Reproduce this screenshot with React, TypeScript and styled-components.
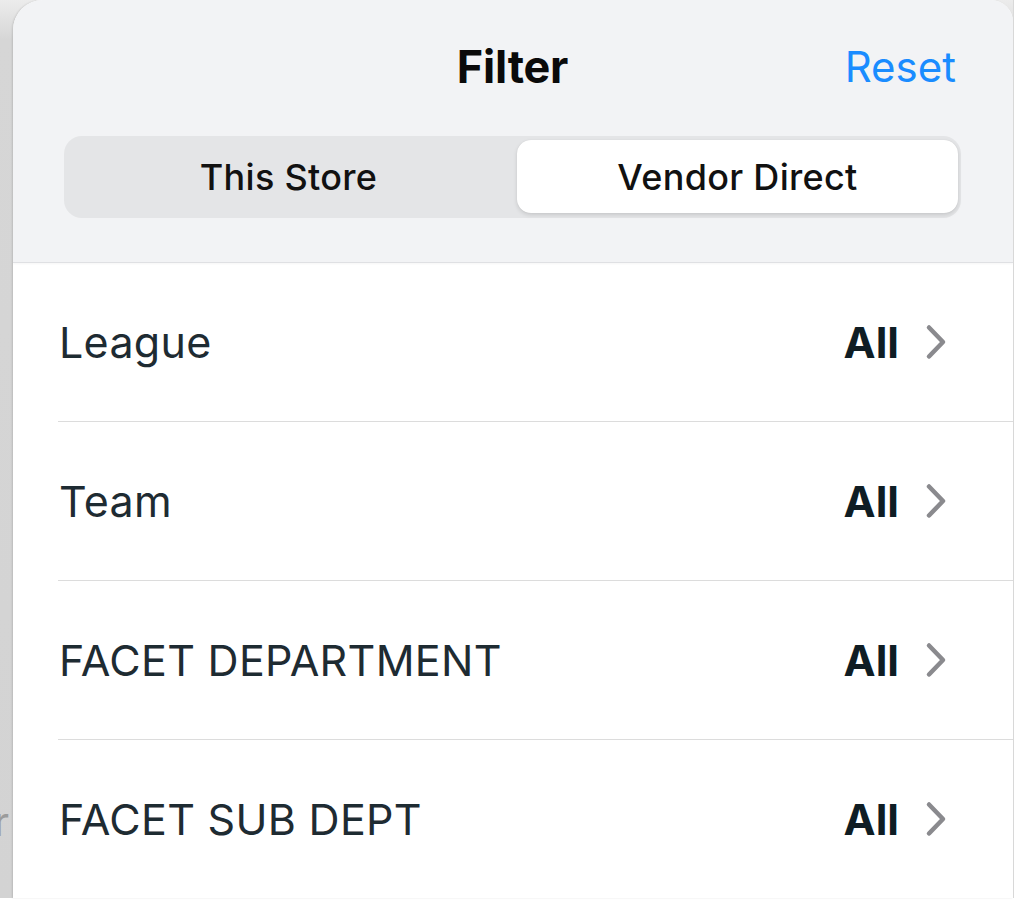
import React from "react";
import styled, { createGlobalStyle } from "styled-components";

const GlobalStyle = createGlobalStyle`
  html, body {
    margin: 0;
    padding: 0;
    background: #ffffff;
  }
  body {
    font-family: Inter, "Noto Sans", "Liberation Sans", sans-serif;
    -webkit-font-smoothing: antialiased;
  }
`;

const Page = styled.div`
  width: 1024px;
  height: 909px;
  display: flex;
  align-items: flex-start;
  background: #ffffff;
  overflow: hidden;
`;

const Backdrop = styled.div`
  width: 1014px;
  height: 898px;
  display: flex;
  background: linear-gradient(to bottom, #ececec 0px, #d6d6d6 40px, #d3d3d3 100%);
  border-right: 1px solid #d9d9d9;
  box-sizing: border-box;
`;

const BehindStrip = styled.div`
  width: 13px;
  flex: none;
  display: flex;
  flex-direction: column;
  justify-content: flex-end;
  overflow: hidden;
  padding-bottom: 56px;
`;

const BehindGlyph = styled.span`
  display: block;
  font-size: 40px;
  line-height: 40px;
  color: #9b9b9b;
  margin-left: -6px;
`;

const Sheet = styled.div`
  flex: 1;
  display: flex;
  flex-direction: column;
  background: #ffffff;
  border-radius: 30px 22px 0 0;
  overflow: hidden;
  box-shadow: -1px 0 2px rgba(0, 0, 0, 0.12);
`;

const Header = styled.header`
  background: #f2f3f5;
  border-bottom: 1px solid #dfe0e3;
  box-shadow: 0 1px 2px rgba(0, 0, 0, 0.04);
  padding: 20px 52px 44px 51px;
  display: flex;
  flex-direction: column;
`;

const TitleRow = styled.div`
  height: 92px;
  display: grid;
  grid-template-columns: 1fr auto 1fr;
  align-items: center;
  margin-bottom: 24px;
`;

const Title = styled.h1`
  grid-column: 2;
  margin: 0;
  font-size: 45px;
  font-weight: 700;
  color: #0a0a0a;
  letter-spacing: -0.2px;
`;

const ResetButton = styled.button`
  grid-column: 3;
  justify-self: end;
  margin-right: 5px;
  border: none;
  background: none;
  padding: 0;
  font-family: inherit;
  font-size: 42px;
  font-weight: 400;
  color: #1a8cff;
  cursor: pointer;
`;

const Segmented = styled.div`
  height: 82px;
  box-sizing: border-box;
  padding: 4px 3px 5px 4px;
  display: grid;
  grid-template-columns: 1fr 1fr;
  gap: 8px;
  background: #e4e5e7;
  border-radius: 18px;
`;

const Segment = styled.div<{ $active?: boolean }>`
  display: flex;
  align-items: center;
  justify-content: center;
  border-radius: 14px;
  font-size: 36px;
  font-weight: 500;
  letter-spacing: 0.3px;
  color: #111111;
  background: ${(p) => (p.$active ? "#ffffff" : "transparent")};
  box-shadow: ${(p) =>
    p.$active ? "0 2px 4px rgba(0, 0, 0, 0.12), 0 0 1px rgba(0, 0, 0, 0.1)" : "none"};
`;

const List = styled.ul`
  list-style: none;
  margin: 0;
  padding: 0 0 0 45px;
`;

const Row = styled.li`
  height: 158px;
  border-bottom: 1px solid #dcdcdc;
  display: flex;
  align-items: center;
  padding: 0 64px 0 1px;
  &:last-child {
    border-bottom-color: #ededed;
  }
`;

const Label = styled.span`
  flex: 1;
  font-size: 43px;
  font-weight: 400;
  letter-spacing: 0.3px;
  color: #1e2b32;
`;

const Value = styled.span`
  font-size: 43px;
  font-weight: 700;
  color: #0f1d24;
  margin-right: 24px;
`;

const Chevron = () => (
  <svg width="26" height="36" viewBox="0 0 26 36" fill="none">
    <path
      d="M6 3.5 L20 18 L6 32.5"
      stroke="#8a8a8e"
      strokeWidth="4.5"
      strokeLinecap="round"
      strokeLinejoin="round"
    />
  </svg>
);

const filters = ["League", "Team", "FACET DEPARTMENT", "FACET SUB DEPT"];

export default function App() {
  return (
    <>
      <GlobalStyle />
      <Page>
        <Backdrop>
          <BehindStrip>
            <BehindGlyph>r</BehindGlyph>
          </BehindStrip>
          <Sheet>
            <Header>
              <TitleRow>
                <Title>Filter</Title>
                <ResetButton>Reset</ResetButton>
              </TitleRow>
              <Segmented>
                <Segment>This Store</Segment>
                <Segment $active>Vendor Direct</Segment>
              </Segmented>
            </Header>
            <List>
              {filters.map((name) => (
                <Row key={name}>
                  <Label>{name}</Label>
                  <Value>All</Value>
                  <Chevron />
                </Row>
              ))}
            </List>
          </Sheet>
        </Backdrop>
      </Page>
    </>
  );
}
